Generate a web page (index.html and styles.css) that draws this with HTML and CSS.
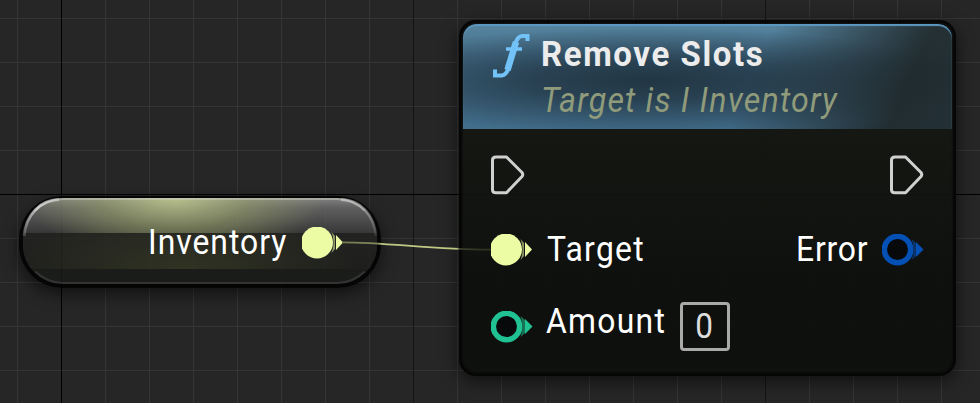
FILE: index.html
```html
<!DOCTYPE html>
<html lang="en">
<head>
<meta charset="utf-8">
<title>Blueprint graph</title>
<link rel="stylesheet" href="styles.css">
</head>
<body>
<svg class="symbols" width="0" height="0" aria-hidden="true">
  <symbol id="exec" viewBox="0 0 34 40">
    <path d="M1.500 5Q1.500 2 5 2H15.500L31 17.500Q32.500 19.500 31 21.500L15.500 37.700H5Q1.500 37.700 1.500 34.700Z" fill="none" stroke="#d0d0d0" stroke-width="3" stroke-linejoin="round"/>
  </symbol>
  <symbol id="ring" viewBox="0 0 42 32">
    <circle cx="15.500" cy="15.500" r="13.200" fill="#07090a" stroke="currentColor" stroke-width="5.500"/>
    <path class="pin-edge" d="M29.500 5L34 9V22L29.500 26Q33.500 15.500 29.500 5Z"/>
    <path d="M34 8L41.500 15.500L34 23Z" fill="currentColor"/>
  </symbol>
  <symbol id="dot" viewBox="0 0 42 32">
    <circle cx="15" cy="15.500" r="16" fill="currentColor"/>
    <path class="pin-edge" d="M29.500 5L33 9V22L29.500 26Q33.500 15.500 29.500 5Z"/>
    <path d="M34 8L41 15.500L34 23Z" fill="currentColor"/>
  </symbol>
</svg>
<main class="canvas">
  <div class="grid"></div>
  <section class="variable">
    <div class="variable-face">
      <span class="label label-inventory">Inventory</span>
      <svg class="pin object"><use href="#dot"/></svg>
    </div>
    <svg class="rim" viewBox="0 0 362 92">
      <defs>
        <linearGradient id="rim-left" x1="0" y1="1" x2="1" y2="0">
          <stop offset="0" stop-color="#ddd" stop-opacity=".2"/>
          <stop offset=".6" stop-color="#ddd" stop-opacity=".8"/>
          <stop offset="1" stop-color="#ddd" stop-opacity=".5"/>
        </linearGradient>
        <linearGradient id="rim-right" x1="0" y1="0" x2="1" y2="1">
          <stop offset="0" stop-color="#ccc" stop-opacity=".6"/>
          <stop offset=".5" stop-color="#ccc" stop-opacity=".5"/>
          <stop offset="1" stop-color="#ccc" stop-opacity=".1"/>
        </linearGradient>
      </defs>
      <path d="M5 40C7 18 22 4 40 3.500" fill="none" stroke="url(#rim-left)" stroke-width="3"/>
      <path d="M322 3.500C341 4 355 18 357 40" fill="none" stroke="url(#rim-right)" stroke-width="3"/>
    </svg>
  </section>
  <section class="node">
    <header class="node-header">
      <svg class="function-icon" viewBox="0 0 38 46">
        <path d="M2 36.500V42.500H9Q14 42 16 33L22 12Q24 3.500 29 3H34.500V8" fill="none" stroke="#72c2f8" stroke-width="4"/>
        <path d="M23 9L14.500 37" stroke="#72c2f8" stroke-width="6.500"/>
        <path d="M13 16H29" stroke="#72c2f8" stroke-width="3.500"/>
      </svg>
      <div class="titles">
        <h1 class="title">Remove Slots</h1>
        <p class="subtitle">Target is I Inventory</p>
      </div>
    </header>
    <div class="row row-exec">
      <svg class="exec"><use href="#exec"/></svg>
      <svg class="exec"><use href="#exec"/></svg>
    </div>
    <div class="row row-target">
      <div class="port">
        <svg class="pin object"><use href="#dot"/></svg>
        <span class="label label-target">Target</span>
      </div>
      <div class="port">
        <span class="label label-error">Error</span>
        <svg class="pin struct"><use href="#ring"/></svg>
      </div>
    </div>
    <div class="row row-amount">
      <div class="port">
        <svg class="pin integer"><use href="#ring"/></svg>
        <span class="label label-amount">Amount</span>
        <span class="value"><span class="digit">0</span></span>
      </div>
    </div>
  </section>
  <svg class="wire" viewBox="0 0 980 403">
    <defs>
      <linearGradient id="wire-fade" gradientUnits="userSpaceOnUse" x1="342" y1="0" x2="491" y2="0">
        <stop offset="0" stop-color="#757a53"/>
        <stop offset=".24" stop-color="#858a5c"/>
        <stop offset=".27" stop-color="#c0c884"/>
        <stop offset=".77" stop-color="#c0c884"/>
        <stop offset=".79" stop-color="#3b3f2a"/>
        <stop offset="1" stop-color="#2c3020"/>
      </linearGradient>
    </defs>
    <path d="M342 242.300C390 242.300 430 249.700 491 249.700" fill="none" stroke="url(#wire-fade)" stroke-width="1.800"/>
  </svg>
</main>
</body>
</html>
```
FILE: styles.css
```css
* { box-sizing: border-box; }

body {
  margin: 0;
  background: #262626;
  font-family: Roboto, "Liberation Sans", sans-serif;
}

svg { display: block; flex: none; }

.symbols { position: absolute; }

.canvas {
  position: relative;
  width: 980px;
  height: 403px;
  overflow: hidden;
}

/* Minor lines every 44px, section lines every 352px. */
.grid {
  height: 403px;
  background:
    linear-gradient(#000, #000) 61px 0 / 1px 100% no-repeat,
    linear-gradient(#000, #000) 0 194px / 100% 1px no-repeat,
    linear-gradient(#141414, #141414) 413px 0 / 1px 100% no-repeat,
    linear-gradient(#141414, #141414) 765px 0 / 1px 100% no-repeat,
    linear-gradient(90deg, #353535 1px, transparent 1px) 17px 0 / 44px 44px,
    linear-gradient(#353535 1px, transparent 1px) 0 18px / 44px 44px,
    #262626;
}

.wire { position: absolute; left: 0; top: 0; width: 980px; height: 403px; }

.variable {
  position: absolute;
  left: 19px;
  top: 196px;
  width: 362px;
  height: 92px;
  border: solid rgba(0, 0, 0, .85);
  border-width: 2px 4px 4px;
  border-radius: 43px;
  box-shadow: 0 6px 16px rgba(0, 0, 0, .55);
}

.rim { position: absolute; left: -4px; top: -2px; width: 362px; height: 92px; }

.variable-face {
  position: relative;
  display: flex;
  align-items: center;
  height: 86px;
  padding: 3px 0 0 126px;
  border-radius: 40px;
  overflow: hidden;
  background:
    radial-gradient(ellipse 150px 60px at 152px 0, rgba(198, 208, 145, .8), rgba(160, 170, 110, .5) 50%, transparent) 0 0 / 100% 35px no-repeat,
    radial-gradient(ellipse 170px 55px at 160px 72px, rgba(66, 72, 40, .5), transparent) 0 0 / 100% 71px no-repeat,
    linear-gradient(rgba(145, 145, 145, .85), rgba(108, 108, 108, .82) 10px, rgba(60, 60, 60, .8) 35px, rgba(34, 35, 32, .8) 35px, rgba(29, 30, 27, .8) 71px, rgba(25, 27, 24, .86) 71px);
}

.variable-face::after {
  content: "";
  position: absolute;
  inset: 0;
  border: 2px solid transparent;
  border-top-color: rgba(210, 210, 200, .5);
  border-bottom-color: rgba(100, 100, 100, .35);
  border-radius: 40px;
}

.label {
  color: #fff;
  font-size: 35px;
  line-height: 42px;
  letter-spacing: 1.400px;
  white-space: nowrap;
  transform: scaleX(.91);
  transform-origin: 0 50%;
}

.pin { width: 42px; height: 32px; }
.pin-edge { fill: currentColor; opacity: .55; }
.object { color: #ebfca4; }
.struct { color: #0550b5; }
.integer { color: #20c294; }

.label-inventory { width: 153px; letter-spacing: 1.100px; transform: translateX(-1px) scaleX(.91); }

.node {
  position: absolute;
  left: 459px;
  top: 20px;
  width: 497px;
  height: 356px;
  padding: 4px;
  border-radius: 17px;
  background: linear-gradient(rgba(20, 22, 18, .93) 110px, rgba(13, 15, 12, .94) 260px);
  box-shadow: inset 0 0 2px 3px #050605, 0 5px 17px rgba(0, 0, 0, .6);
}

.node-header {
  display: flex;
  height: 105px;
  padding: 9px 0 0 30px;
  border-radius: 14px 14px 0 0;
  box-shadow: inset 0 2px 1px #5b98c2;
  background:
    linear-gradient(114deg, transparent 58%, rgba(28, 34, 34, .85) 88%, rgba(29, 37, 38, .85)),
    radial-gradient(ellipse 320px 54px at 185px 57px, #223644, rgba(34, 54, 68, .8) 35%, transparent),
    linear-gradient(#56849f, #426c88 40%, #426e8c);
}

.function-icon { width: 38px; height: 46px; }
.titles { margin-left: 10px; }

.title {
  margin: 0;
  color: #ececec;
  font-size: 34.500px;
  font-weight: 700;
  line-height: 44px;
  letter-spacing: 1.700px;
  white-space: nowrap;
  transform: translateY(-1px) scaleX(.955);
  transform-origin: 0 50%;
}

.subtitle {
  margin: 3px 0 0;
  color: #8f9b7a;
  font-size: 35px;
  font-style: italic;
  line-height: 42px;
  letter-spacing: 1.300px;
  white-space: nowrap;
  transform: scaleX(.919);
  transform-origin: 0 50%;
}

.row {
  display: flex;
  justify-content: space-between;
  padding-left: 28px;
}

.port { display: flex; align-items: center; }
.exec { width: 34px; height: 40px; }
.row-exec { margin-top: 26px; padding-right: 28px; }
.row-target { margin-top: 34px; height: 42px; padding-right: 28px; }
.row-amount { margin-top: 31px; height: 50px; }
.label-target { margin-left: 14px; }
.label-error { width: 86px; letter-spacing: .900px; }
.label-amount { width: 134px; margin: -11px 0 0 13px; }

.value {
  width: 50px;
  height: 49px;
  margin-top: -1px;
  border: 3px solid #aaa;
  border-radius: 4px;
  color: #ddd;
  font-size: 35px;
  line-height: 43px;
  text-align: center;
}

.digit { display: block; transform: translateX(-1px) scaleX(.9); }
```
